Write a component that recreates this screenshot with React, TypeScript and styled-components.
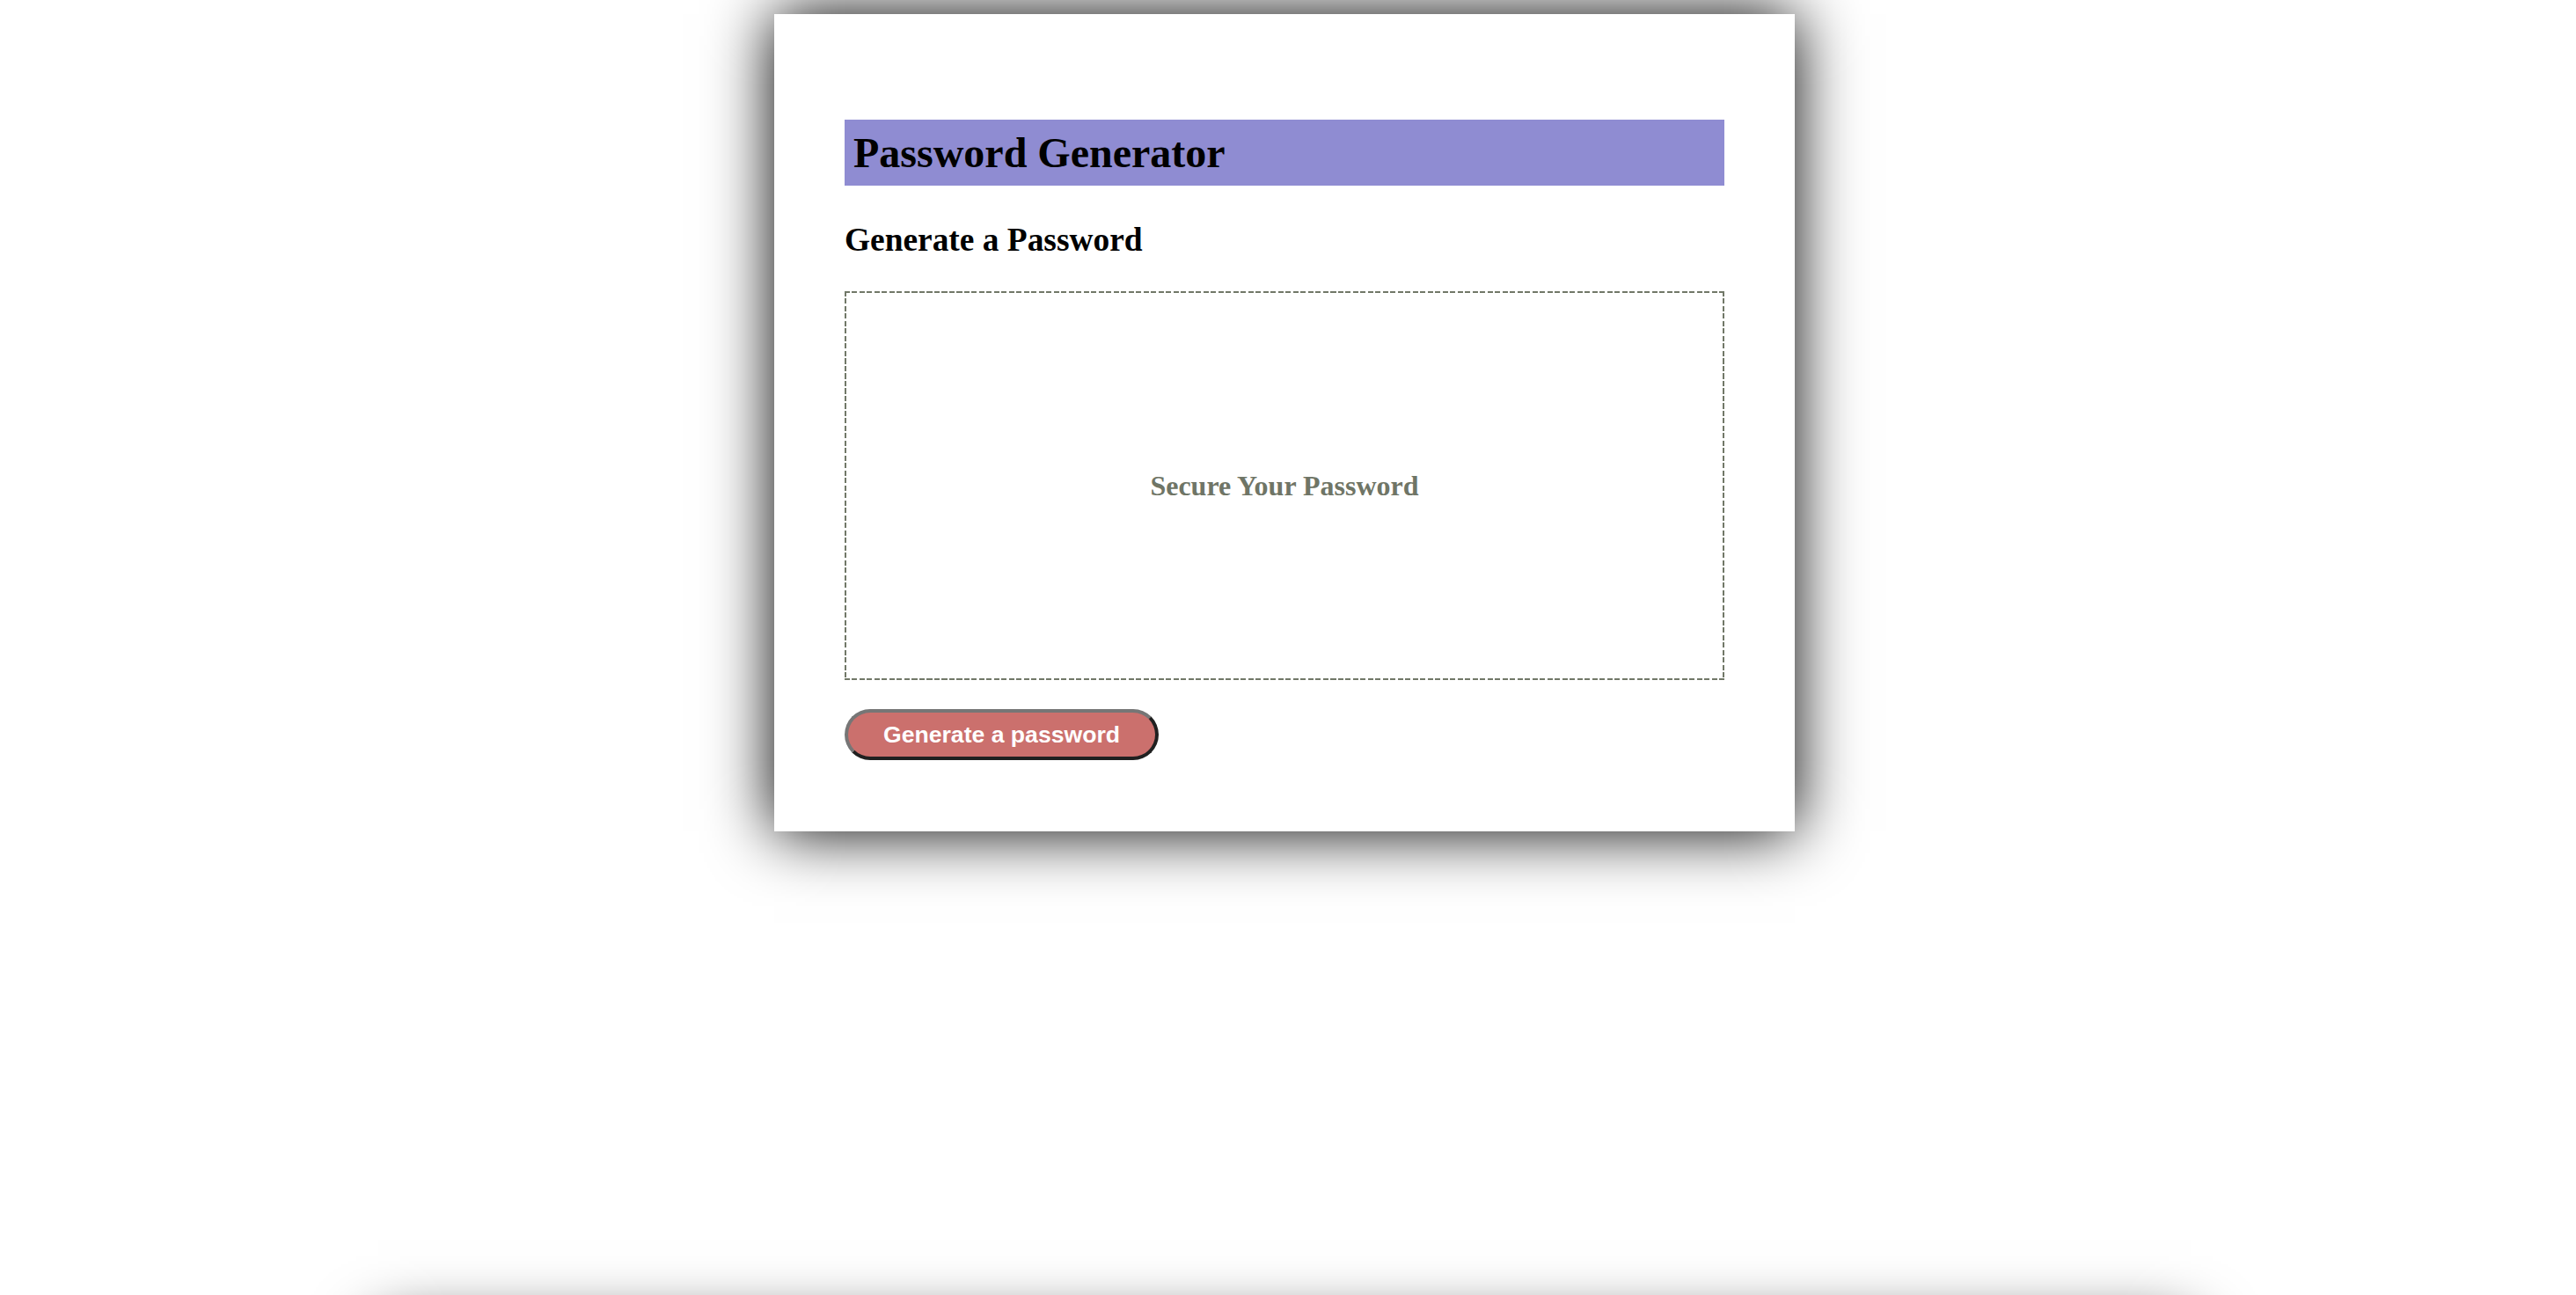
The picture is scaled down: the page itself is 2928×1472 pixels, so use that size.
import styled, { createGlobalStyle } from "styled-components";

const GlobalStyle = createGlobalStyle`
  html, body {
    margin: 0;
    padding: 0;
    background: #ffffff;
  }
  body {
    font-family: "Liberation Serif", "Times New Roman", serif;
    overflow: hidden;
  }
`;

const dash = "#717868";

export default function App(): JSX.Element {
  return (
    <>
      <GlobalStyle />
      <Page>
        <Card>
          <Header>
            <Title>Password Generator</Title>
          </Header>
          <SubTitle>Generate a Password</SubTitle>
          <PasswordBox>
            <Placeholder>Secure Your Password</Placeholder>
          </PasswordBox>
          <GenerateButton type="button">Generate a password</GenerateButton>
        </Card>
        <Footer />
      </Page>
    </>
  );
}

const Page = styled.main`
  display: flex;
  flex-direction: column;
  align-items: center;
  padding: 16px 8px 0 0;
  height: 1472px;
  box-sizing: border-box;
`;

const Card = styled.section`
  width: 1160px;
  box-sizing: border-box;
  padding: 120px 80px 81px;
  background: #ffffff;
  box-shadow: 0 0 70px rgba(0, 0, 0, 1);
  display: flex;
  flex-direction: column;
  align-items: flex-start;
  flex-shrink: 0;
`;

const Header = styled.header`
  width: 100%;
  box-sizing: border-box;
  background: #8f8cd2;
  padding: 10px;
`;

const Title = styled.h1`
  margin: 0;
  font-size: 48px;
  font-weight: bold;
  line-height: 55px;
  color: #000000;
`;

const SubTitle = styled.h2`
  margin: 40px 0 37px;
  font-size: 37.4px;
  font-weight: bold;
  line-height: 43px;
  color: #000000;
`;

// dashed frame drawn with gradients so the dash rhythm matches the original
const PasswordBox = styled.div`
  width: 100%;
  height: 442px;
  box-sizing: border-box;
  background:
    repeating-linear-gradient(90deg, ${dash} 0 6px, transparent 6px 8.5px) left top / 100% 2px no-repeat,
    repeating-linear-gradient(90deg, ${dash} 0 6px, transparent 6px 8.5px) left bottom / 100% 2px no-repeat,
    repeating-linear-gradient(180deg, ${dash} 0 6px, transparent 6px 8.5px) left top / 2px 100% no-repeat,
    repeating-linear-gradient(180deg, ${dash} 0 6px, transparent 6px 8.5px) right top / 2px 100% no-repeat;
  display: flex;
  align-items: center;
  justify-content: center;
`;

const Placeholder = styled.span`
  font-size: 32px;
  font-weight: bold;
  color: #6f7566;
`;

const GenerateButton = styled.button`
  margin-top: 33px;
  height: 58px;
  width: 357px;
  box-sizing: border-box;
  border-radius: 29px;
  border: 4px solid;
  border-color: #767676 #202020 #202020 #767676;
  background: #cb706d;
  color: #ffffff;
  font-family: "Liberation Sans", Arial, sans-serif;
  font-weight: bold;
  font-size: 26.6px;
  padding: 0;
  cursor: pointer;
`;

const Footer = styled.div`
  width: 2060px;
  height: 400px;
  margin-top: 568px;
  flex-shrink: 0;
  background: #ffffff;
  box-shadow: 0 0 70px rgba(0, 0, 0, 1);
`;
